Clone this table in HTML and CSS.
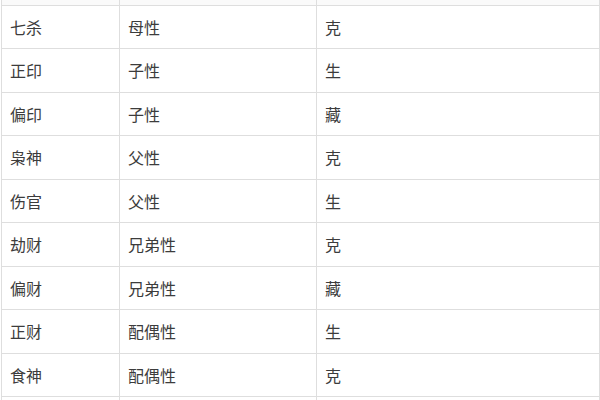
FILE: index.html
```html
<!DOCTYPE html>
<html lang="zh">
<head>
<meta charset="utf-8">
<link rel="stylesheet" href="styles.css">
</head>
<body>
<div class="frame">
<table class="grid">
<colgroup><col class="c1"><col class="c2"><col class="c3"></colgroup>
<tr class="cut"><td></td><td></td><td></td></tr>
<tr><td>七杀</td><td>母性</td><td>克</td></tr>
<tr><td>正印</td><td>子性</td><td>生</td></tr>
<tr><td>偏印</td><td>子性</td><td>藏</td></tr>
<tr><td>枭神</td><td>父性</td><td>克</td></tr>
<tr><td>伤官</td><td>父性</td><td>生</td></tr>
<tr><td>劫财</td><td>兄弟性</td><td>克</td></tr>
<tr><td>偏财</td><td>兄弟性</td><td>藏</td></tr>
<tr><td>正财</td><td>配偶性</td><td>生</td></tr>
<tr><td>食神</td><td>配偶性</td><td>克</td></tr>
<tr><td>&nbsp;</td><td>&nbsp;</td><td>&nbsp;</td></tr>
</table>
</div>
</body>
</html>
```
FILE: styles.css
```css
html, body {
  margin: 0;
  padding: 0;
  background: #ffffff;
}
.frame {
  width: 600px;
  height: 400px;
  overflow: hidden;
  padding-left: 1px;
  box-sizing: border-box;
}
.grid {
  border-collapse: collapse;
  table-layout: fixed;
  width: 598px;
  font-family: "Noto Sans CJK SC", "Noto Sans", sans-serif;
  font-size: 16px;
  color: #3c3c3c;
}
.c1 { width: 118px; }
.c2 { width: 197px; }
.c3 { width: 283px; }
.grid td {
  border: 1px solid #dedede;
  height: 43.5px;
  padding: 0 0 0 8px;
  box-sizing: border-box;
  vertical-align: middle;
  line-height: 20px;
}
.grid tr.cut td {
  height: 5px;
  border-top: none;
  background: #fafafa;
}
```
